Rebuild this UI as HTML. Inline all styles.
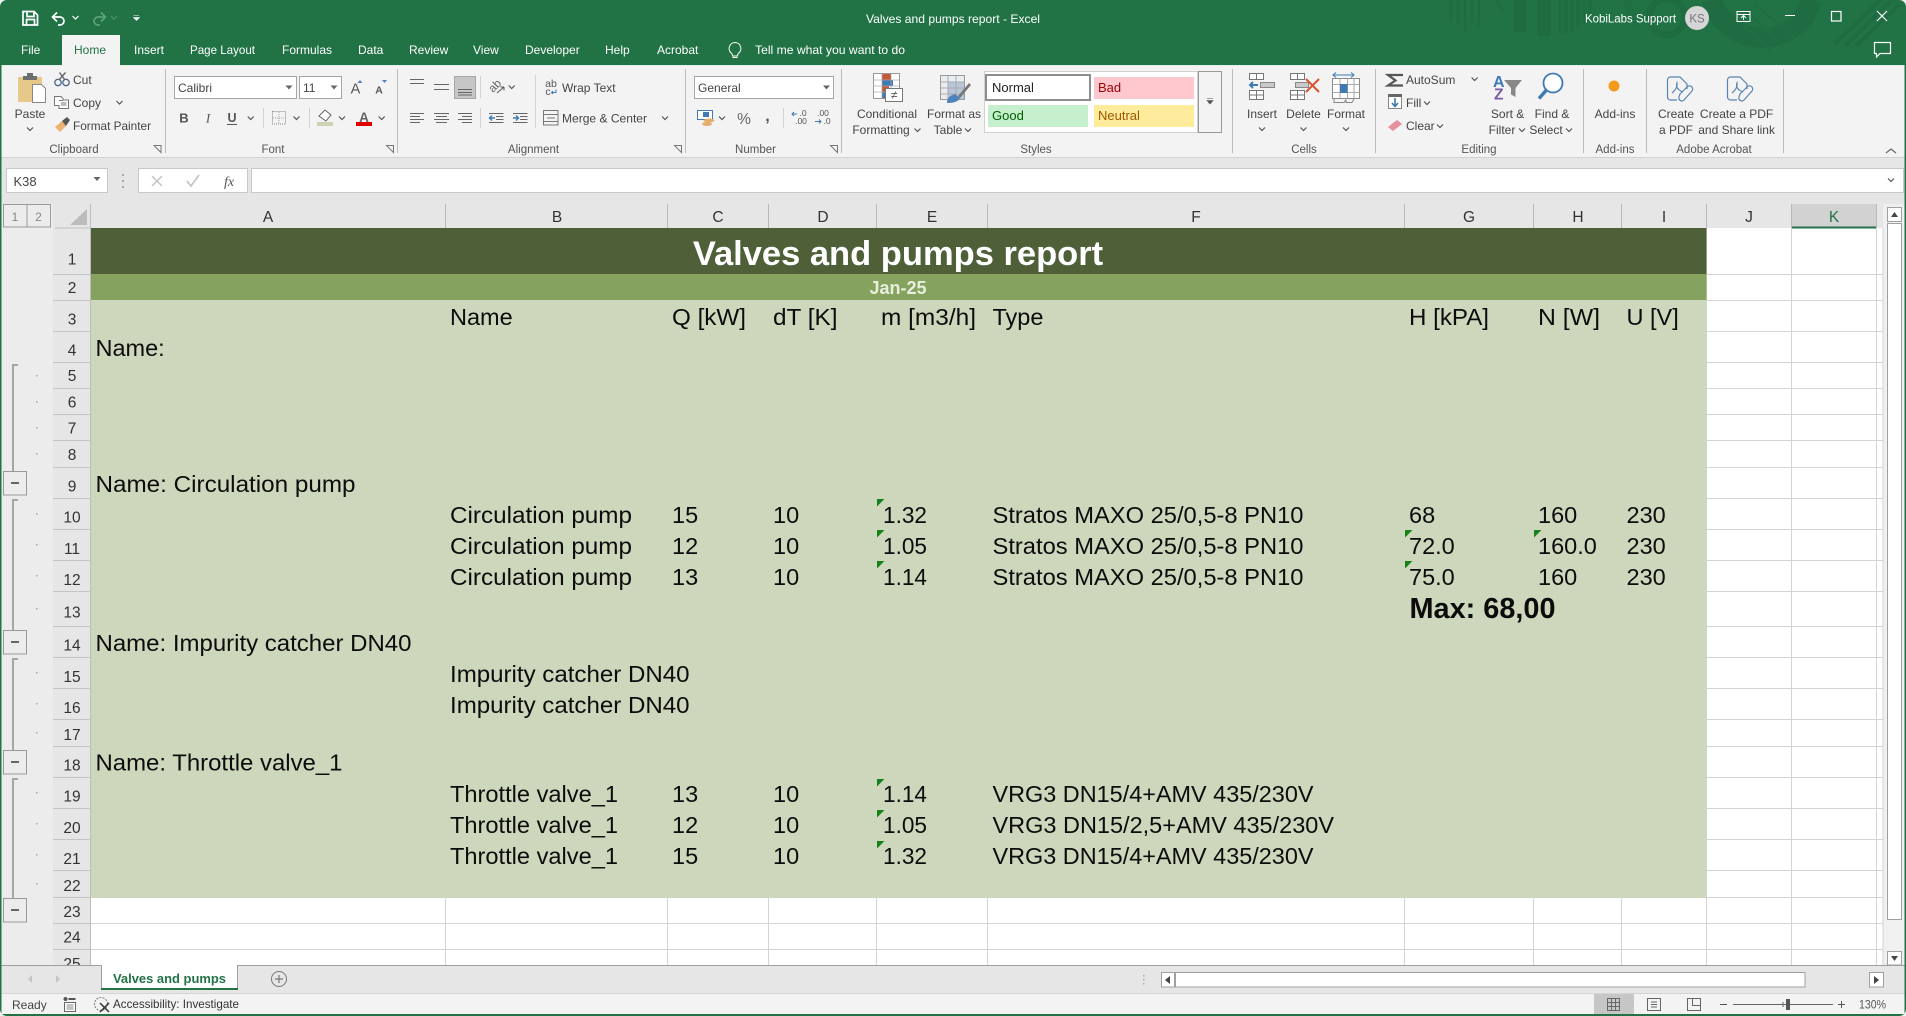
<!DOCTYPE html>
<html lang="en"><head><meta charset="utf-8"><title>Valves and pumps report - Excel</title>
<style>
html,body{margin:0;padding:0;background:#217346;overflow:hidden}
svg{display:block;font-family:"Liberation Sans",sans-serif}
.r{font-size:12px;fill:#444}
.rc{font-size:12px;fill:#444;text-anchor:middle}
.g{font-size:11.5px;fill:#555;text-anchor:middle}
.tab{font-size:12px;fill:#fff}
.c{font-size:23.5px;fill:#0c0c0c}
.h{font-size:15.5px;fill:#333;text-anchor:middle}
.n{font-size:15.5px;fill:#333;text-anchor:middle}
.chev{fill:none;stroke:#555;stroke-width:1.2}
</style></head><body>
<svg width="1906" height="1016" viewBox="0 0 1906 1016" xmlns="http://www.w3.org/2000/svg">
<defs>
<path id="c" class="chev" d="M-3 -1.5L0 1.5L3 -1.5"/>
<path id="d" d="M-3.5 -2H3.5L0 2Z" fill="#666"/>
<path id="x" d="M-3.5 -3.5L3.5 3.5V-3.5H-3.5Z" fill="none" stroke="#777" stroke-width="1"/>
<path id="tri" d="M0 1H7.5L0 8.5Z" fill="#17811d"/>
</defs>

<!-- title bar -->
<rect width="1906" height="1016" fill="#217346"/>
<g fill="none" stroke="#1f6c42">
<path d="M1451 0V22M1458 0V24M1465 0V32M1472 0V22M1479 0V26" stroke-width="3"/>
<path d="M1497 0L1503 12" stroke-width="3"/>
<path d="M1520 0V32" stroke-width="12"/>
<path d="M1544 0V36" stroke-width="14"/>
<path d="M1560 0V34M1566 0V34M1572 0V32M1578 0V28M1584 0V24M1590 0V20" stroke-width="3"/>
<circle cx="1667" cy="17" r="18" stroke-width="7"/>
<path d="M1627 0A34 34 0 0 0 1640 24" stroke-width="8" opacity=".6"/>
<path d="M1712 0A52 52 0 0 0 1812 0" stroke-width="20"/>
<path d="M1730 12L1770 50M1742 8L1782 44M1754 4L1794 36" stroke="#206e43" stroke-width="3"/>
<path d="M1835 44L1880 0M1845 46L1892 0M1856 46L1900 4" stroke-width="4"/>
</g>
<path d="M23 11.500H34L37.500 15V25H23Z M27 11.500V16.500H34V11.500 M26.500 25V19.500H34.500V25" fill="none" stroke="#fff" stroke-width="1.700"/>
<path d="M57 12.500L52.500 17L57 21.500 M53 17H60A4 4 0 0 1 60 25H58" fill="none" stroke="#fff" stroke-width="1.700"/>
<path d="M72.500 16L75.500 19L78.500 16" fill="none" stroke="#fff" stroke-width="1.200"/>
<path d="M101 12.500L105.500 17L101 21.500 M105 17H98A4 4 0 0 0 98 25H100" fill="none" stroke="#5da07a" stroke-width="1.700"/>
<path d="M111 16L114 19L117 16" fill="none" stroke="#4e9570" stroke-width="1.200"/>
<path d="M133.500 15.500H139M133.500 17.500H139.500L136.500 20.500Z" fill="#fff" stroke="#fff" stroke-width=".6"/>
<text x="866" y="23" class="tab" textLength="174" lengthAdjust="spacingAndGlyphs">Valves and pumps report  -  Excel</text>
<text x="1585" y="22.500" class="tab" textLength="91" lengthAdjust="spacingAndGlyphs">KobiLabs Support</text>
<circle cx="1697" cy="18" r="12" fill="#d6d6d6"/><text x="1697" y="22.500" font-size="11.500" fill="#777" text-anchor="middle">KS</text>
<path d="M1737 11.500H1750V21.500H1737ZM1737 14.500H1750M1743.500 20V16M1741 18L1743.500 15.500L1746 18" fill="none" stroke="#fff"/>
<path d="M1785 15.500H1795" stroke="#fff" stroke-width="1"/>
<rect x="1831.500" y="11.500" width="9.500" height="9.500" fill="none" stroke="#fff" stroke-width="1.200"/>
<path d="M1877 11L1887 21M1887 11L1877 21" stroke="#fff" stroke-width="1.200"/>
<path d="M1874.500 42.500H1890.500V53.500H1880L1876.500 57V53.500H1874.500Z" fill="none" stroke="#fff" stroke-width="1.200"/>

<!-- tabs -->
<rect x="62" y="35" width="58" height="31" fill="#f3f3f3"/>
<text x="21" y="54" class="tab">File</text>
<text x="74" y="54" class="tab" style="fill:#217346">Home</text>
<text x="134" y="54" class="tab">Insert</text>
<text x="190" y="54" class="tab" textLength="65" lengthAdjust="spacingAndGlyphs">Page Layout</text>
<text x="282" y="54" class="tab">Formulas</text>
<text x="358" y="54" class="tab">Data</text>
<text x="409" y="54" class="tab">Review</text>
<text x="473" y="54" class="tab">View</text>
<text x="525" y="54" class="tab">Developer</text>
<text x="605" y="54" class="tab">Help</text>
<text x="657" y="54" class="tab">Acrobat</text>
<path d="M735 42.500a6 6 0 0 1 3.500 10.800c-.8.700-1 1.500-1 2.700h-5c0-1.200-.2-2-1-2.700A6 6 0 0 1 735 42.500ZM732.500 57.500h5" fill="none" stroke="#fff"/>
<text x="755" y="54" class="tab" textLength="150" lengthAdjust="spacingAndGlyphs">Tell me what you want to do</text>

<!-- ribbon -->
<rect x="1" y="65" width="1904" height="92" fill="#f3f3f3"/>
<rect x="1" y="65" width="61" height="1" fill="#e2f1e8"/><rect x="120" y="65" width="1785" height="1" fill="#e2f1e8"/>
<rect x="1" y="157" width="1904" height="47" fill="#e6e6e6"/>
<rect x="1" y="157" width="1904" height="1" fill="#d2d2d2"/>
<g stroke="#bdbdbd" stroke-width="1">
<path d="M165.500 69V153M397.500 69V153M685.500 69V153M841.500 69V153M1232.500 69V153M1375.500 69V153M1583.500 69V153M1646.500 69V153M1783.500 69V153"/>
</g>
<g stroke="#d2d2d2" stroke-width="1"><path d="M263.500 108V128M309.500 108V128M480.500 76V98M480.500 108V128M535.500 75V128M783.500 108V128"/></g>
<g>
<text x="74" y="153" class="g">Clipboard</text><text x="273" y="153" class="g">Font</text><text x="533.500" y="153" class="g">Alignment</text><text x="755.500" y="153" class="g">Number</text><text x="1036" y="153" class="g">Styles</text><text x="1304" y="153" class="g">Cells</text><text x="1479" y="153" class="g">Editing</text><text x="1615" y="153" class="g">Add-ins</text><text x="1714" y="153" class="g">Adobe Acrobat</text>
</g>
<use href="#x" x="157.500" y="149"/><use href="#x" x="390" y="149"/><use href="#x" x="678" y="149"/><use href="#x" x="834" y="149"/>
<path d="M1886 153L1891 149L1896 153" fill="none" stroke="#666" stroke-width="1.200"/>

<!-- clipboard -->
<rect x="18" y="77" width="24" height="25" fill="#e6c988"/>
<path d="M23 80V76H27V73H33V76H37V80Z" fill="#6e6e6e"/>
<path d="M32.500 84.500H41.500L45.500 88.500V102.500H32.500Z" fill="#fff" stroke="#888"/>
<text x="30" y="118" class="rc">Paste</text><use href="#c" x="30" y="129"/>
<g fill="none" stroke="#50688a" stroke-width="1.300"><circle cx="58" cy="82.500" r="3.200"/><circle cx="66" cy="82.500" r="3.200"/></g>
<path d="M59.500 72.500L65 80M65.500 72.500L59 80" stroke="#666" stroke-width="1.400"/>
<text x="73" y="84" class="r">Cut</text>
<path d="M54.500 96.500H61L63 98.500V100H68.500V108.500H59V105.500H54.500Z M59 100.500H63" fill="#fff" stroke="#777"/>
<path d="M61 103H66.500M61 105H66.500" stroke="#777"/>
<text x="73" y="107" class="r">Copy</text><use href="#c" x="119.500" y="102.500"/>
<path d="M55 127L62 121L66 126L60 132Z" fill="#edb26f"/><path d="M62 121L67 117L70 120L66 126Z" fill="#555"/>
<text x="73" y="130" class="r" textLength="78" lengthAdjust="spacingAndGlyphs">Format Painter</text>

<!-- font -->
<rect x="174.500" y="76.500" width="122" height="22" fill="#fff" stroke="#a6a6a6"/>
<text x="178" y="92" class="r">Calibri</text><use href="#d" x="289" y="87.500"/>
<rect x="299.500" y="76.500" width="42" height="22" fill="#fff" stroke="#a6a6a6"/>
<text x="303" y="92" class="r">11</text><use href="#d" x="334" y="87.500"/>
<text x="355.500" y="93.500" text-anchor="middle" font-size="14.500" fill="#555">A</text><path d="M357.500 83L360 80L362.500 83Z" fill="#4f81bd"/>
<text x="379" y="93.500" text-anchor="middle" font-size="10.500" fill="#555" font-weight="bold">A</text><path d="M382 80H387L384.500 83Z" fill="#4f81bd"/>
<text x="184" y="122.500" text-anchor="middle" font-size="13" font-weight="bold" fill="#555">B</text>
<text x="208" y="122.500" text-anchor="middle" font-size="13" font-style="italic" font-family="Liberation Serif" fill="#555">I</text>
<text x="232" y="122" text-anchor="middle" font-size="12.500" font-weight="bold" fill="#555">U</text><path d="M227 124.500H237" stroke="#555"/>
<use href="#c" x="250.700" y="118"/>
<rect x="272.500" y="111.500" width="13" height="12.500" fill="none" stroke="#888" stroke-dasharray="1 1"/><path d="M279 112V124M273 118H285" stroke="#aaa" stroke-dasharray="1 1"/>
<use href="#c" x="296.500" y="118"/>
<path d="M319 116L325 110L331 115L326 121Z" fill="#fff" stroke="#666"/><rect x="317" y="122" width="16" height="4" fill="#cdd2b5"/>
<use href="#c" x="342" y="118"/>
<text x="364" y="122" text-anchor="middle" font-size="13.500" font-weight="bold" fill="#666">A</text><rect x="356" y="122" width="16" height="4" fill="#e00000"/>
<use href="#c" x="381.700" y="118"/>

<!-- alignment -->
<rect x="454.500" y="76.500" width="21" height="22" fill="#c6c6c6" stroke="#a6a6a6"/>
<g stroke="#666"><path d="M410 79.500H424M410 83.500H424 M434 84.500H449M434 89.500H449 M458 89.500H472M458 92.500H472M458 95H472" />
<path d="M410 113.500H424M410 116.500H420M410 119.500H424M410 122.500H420"/>
<path d="M434 113.500H449M436 116.500H447M434 119.500H449M436 122.500H447"/>
<path d="M458 113.500H472M462 116.500H472M458 119.500H472M462 122.500H472"/>
<path d="M489 113.500H503.500M496 116.500H503.500M496 119.500H503.500M489 122.500H503.500 M513 113.500H527.500M520 116.500H527.500M520 119.500H527.500M513 122.500H527.500"/></g>
<path d="M495 118H489.500M492 115.500L489.500 118L492 120.500 M513 118H518.500M516 115.500L518.500 118L516 120.500" fill="none" stroke="#3f7ab5" stroke-width="1.400"/>
<text transform="translate(493 93) rotate(-45)" font-size="11.500" fill="#666">ab</text><path d="M497 93L504 87M504 87H500.500M504 87V90.500" fill="none" stroke="#555"/>
<use href="#c" x="511.700" y="87"/>
<text x="551" y="87" text-anchor="middle" font-size="10.500" fill="#555">ab</text><text x="548" y="95" text-anchor="middle" font-size="10.500" fill="#555">c</text><path d="M556 89.500V92.500H551.500M553 91L551.500 92.500L553 94" fill="none" stroke="#3f7ab5"/>
<text x="562" y="92" class="r">Wrap Text</text>
<rect x="543.500" y="110.500" width="14.500" height="14.500" fill="none" stroke="#777"/><path d="M543.500 114.500H558M543.500 121.500H558M547 118H555" stroke="#777"/>
<text x="562" y="122.500" class="r" textLength="85" lengthAdjust="spacingAndGlyphs">Merge &amp; Center</text><use href="#c" x="665" y="118"/>

<!-- number -->
<rect x="694.500" y="76.500" width="139" height="22" fill="#fff" stroke="#a6a6a6"/>
<text x="698" y="92" class="r">General</text><use href="#d" x="826.500" y="87.500"/>
<rect x="697.500" y="110.500" width="15" height="9" fill="#fff" stroke="#3f7ab5"/><path d="M703 112H709V117H703Z" fill="#3f7ab5"/><ellipse cx="709" cy="120.500" rx="5.500" ry="2" fill="#e2b06c"/><ellipse cx="707" cy="124" rx="5" ry="2" fill="#e2b06c"/>
<use href="#c" x="722" y="118"/>
<text x="744" y="124" text-anchor="middle" font-size="15.500" fill="#666">%</text>
<text x="767.500" y="121" text-anchor="middle" font-size="16" font-weight="bold" fill="#555">,</text>
<text x="803" y="116" text-anchor="middle" font-size="8.500" fill="#555">.0</text><text x="801" y="124" text-anchor="middle" font-size="8.500" fill="#555">.00</text><path d="M792 114H797M794 112L792 114L794 116" fill="none" stroke="#3f7ab5"/>
<text x="823" y="116" text-anchor="middle" font-size="8.500" fill="#555">.00</text><text x="827" y="124" text-anchor="middle" font-size="8.500" fill="#555">.0</text><path d="M815 121.500H821M819 119.500L821 121.500L819 123.500" fill="none" stroke="#3f7ab5"/>

<!-- styles -->
<g>
<rect x="873.500" y="73.500" width="26" height="25" fill="#fff" stroke="#999"/>
<rect x="882" y="74" width="9" height="6" fill="#c5573a"/><rect x="882" y="80" width="11" height="6" fill="#3f7ab5"/><rect x="882" y="86" width="7" height="6" fill="#c5573a"/><rect x="882" y="92" width="3" height="6" fill="#3f7ab5"/>
<path d="M882 74V98M891 74V98M874 80H899M874 86H899M874 92H899" stroke="#aaa" opacity=".7"/>
<rect x="885.500" y="88.500" width="17" height="13" fill="#fff" stroke="#777"/><text x="894" y="99" text-anchor="middle" font-size="12" fill="#555">≠</text>
</g>
<text x="887" y="118" class="rc">Conditional</text><text x="881" y="134" class="rc">Formatting</text><use href="#c" x="917.500" y="130"/>
<rect x="940.500" y="75.500" width="24" height="24" fill="#e9edf2" stroke="#999"/><rect x="948" y="82" width="16" height="17" fill="#b7c6d8"/>
<path d="M948 76V99M956 76V99M941 82H964M941 88H964M941 94H964" stroke="#aaa"/>
<path d="M958 96L969 83L971 85L960 98Z" fill="#777"/><path d="M947 103Q947 96 955 94L960 98Q958 103 947 103Z" fill="#4f81bd"/>
<text x="954" y="118" class="rc">Format as</text><text x="948" y="134" class="rc">Table</text><use href="#c" x="968" y="130"/>
<rect x="984.500" y="71.500" width="213" height="61" fill="#fff" stroke="#d0d0d0"/>
<rect x="986" y="75" width="104" height="25" fill="#fff" stroke="#8e8e8e" stroke-width="2"/>
<text x="992" y="92" font-size="13" fill="#222">Normal</text>
<rect x="1094" y="77" width="100" height="22" fill="#ffc7ce"/><text x="1098" y="92" font-size="13" fill="#9c0006">Bad</text>
<rect x="988" y="105" width="100" height="22" fill="#c6efce"/><text x="992" y="120" font-size="13" fill="#006100">Good</text>
<rect x="1094" y="105" width="100" height="22" fill="#ffeb9c"/><text x="1098" y="120" font-size="13" fill="#9c5700">Neutral</text>
<rect x="1198.500" y="71.500" width="23" height="61" fill="#f3f3f3" stroke="#999"/>
<path d="M1207 98.500H1213M1207 100.500H1213L1210 104Z" fill="#555" stroke="#555" stroke-width=".6"/>

<!-- cells -->
<g><rect x="1249.500" y="73.500" width="14" height="6" fill="#fff" stroke="#777"/><path d="M1256.500 73.500V79.500" stroke="#777"/>
<rect x="1260.500" y="82.500" width="14" height="5" fill="#c9c9c9" stroke="#888"/><path d="M1258 85H1250M1253 82L1250 85L1253 88" fill="none" stroke="#3f7ab5" stroke-width="2"/>
<rect x="1249.500" y="90.500" width="14" height="9" fill="#fff" stroke="#777"/><path d="M1256.500 90.500V99.500M1249.500 95H1263.500" stroke="#777"/></g>
<text x="1262" y="118" class="rc">Insert</text><use href="#c" x="1262" y="129"/>
<rect x="1290.500" y="73.500" width="14" height="6" fill="#fff" stroke="#777"/><rect x="1295.500" y="82.500" width="13" height="5" fill="#c9c9c9" stroke="#888"/><rect x="1290.500" y="90.500" width="14" height="9" fill="#fff" stroke="#777"/><path d="M1297.500 90.500V99.500M1290.500 95H1304.500M1297.500 73.500V79.500" stroke="#777"/>
<path d="M1306 79L1319 92M1319 79L1306 92" stroke="#d65532" stroke-width="2"/>
<text x="1303.500" y="118" class="rc">Delete</text><use href="#c" x="1303.500" y="129"/>
<rect x="1332.500" y="78.500" width="27" height="20" fill="#fff" stroke="#888"/><path d="M1340 78.500V98.500M1347.500 78.500V98.500M1354 78.500V98.500M1332.500 84.500H1359.500M1332.500 92.500H1359.500" stroke="#aaa"/><rect x="1340" y="84" width="7.500" height="9" fill="#3f7ab5"/>
<path d="M1333 75H1354M1336 72.500L1333 75L1336 77.500M1351 72.500L1354 75L1351 77.500" fill="none" stroke="#3f7ab5"/>
<path d="M1334 98.500V102.500H1344L1346 99.500M1346 99.500V102.500H1352L1354 99" fill="none" stroke="#888"/>
<text x="1346" y="118" class="rc">Format</text><use href="#c" x="1346" y="129"/>

<!-- editing -->
<path d="M1403 75H1388L1395.500 80.500L1388 85.500H1403" fill="none" stroke="#555" stroke-width="2.200"/>
<text x="1406" y="84" class="r">AutoSum</text><use href="#c" x="1474.600" y="79"/>
<rect x="1388.500" y="94.500" width="13" height="14" fill="#fff" stroke="#888"/><rect x="1388" y="94" width="14" height="3" fill="#666"/><path d="M1395 98V106M1392 103L1395 106.500L1398 103" fill="none" stroke="#3f7ab5" stroke-width="1.600"/>
<text x="1406" y="107" class="r">Fill</text><use href="#c" x="1427" y="103"/>
<path d="M1388 127L1397 120L1402 124L1393 131Z" fill="#e88f9e"/>
<text x="1406" y="130" class="r">Clear</text><use href="#c" x="1440" y="126"/>
<text x="1493" y="87" font-size="16" font-weight="bold" fill="#3f7ab5">A</text><text x="1494" y="99.500" font-size="15.500" font-weight="bold" fill="#7b5aa6">Z</text>
<path d="M1504 80H1522L1515.500 88V97L1511 94.500V88Z" fill="#888"/>
<text x="1507.600" y="118" class="rc">Sort &amp;</text><text x="1502" y="134" class="rc">Filter</text><use href="#c" x="1522" y="130"/>
<circle cx="1553" cy="83" r="9.500" fill="#fff" stroke="#3f7ab5" stroke-width="1.800"/><path d="M1546.500 90L1539 98.500" stroke="#3f7ab5" stroke-width="3.500"/>
<text x="1552" y="118" class="rc">Find &amp;</text><text x="1546" y="134" class="rc">Select</text><use href="#c" x="1569" y="130"/>

<!-- addins -->
<circle cx="1614" cy="86" r="5.500" fill="#f39b1e"/>
<text x="1615" y="118" class="rc">Add-ins</text>

<!-- acrobat -->
<g fill="none" stroke="#5b84b1" stroke-width="1.200">
<path d="M1667.500 97V80a3 3 0 0 1 3-3H1680L1687 84V89M1667.500 97a3 3 0 0 0 3 3H1677"/><path d="M1672 93Q1678 88 1677 83Q1675 89 1683 92"/>
<path d="M1680 94L1687 87A3 3 0 0 1 1692 91L1684 100A3 3 0 0 1 1679 97Z"/>
<path d="M1727.500 97V80a3 3 0 0 1 3-3H1740L1747 84V89M1727.500 97a3 3 0 0 0 3 3H1737"/><path d="M1732 93Q1738 88 1737 83Q1735 89 1743 92"/>
<path d="M1740 94L1747 87A3 3 0 0 1 1752 91L1744 100A3 3 0 0 1 1739 97Z"/>
</g>
<text x="1676" y="118" class="rc">Create</text><text x="1676" y="134" class="rc">a PDF</text>
<text x="1736.600" y="118" class="rc">Create a PDF</text><text x="1736.600" y="134" class="rc">and Share link</text>

<!-- formula bar -->
<rect x="6.500" y="168.500" width="101" height="24" fill="#fff" stroke="#c8c8c8"/>
<text x="13.500" y="186" font-size="13" fill="#444">K38</text><use href="#d" x="97" y="179"/>
<g fill="#aaa"><rect x="122" y="174" width="2" height="2"/><rect x="122" y="180" width="2" height="2"/><rect x="122" y="186" width="2" height="2"/></g>
<rect x="138.500" y="168.500" width="109" height="24" fill="#fff" stroke="#c8c8c8"/>
<path d="M152 176L162 186M162 176L152 186" stroke="#c4c4c4" stroke-width="1.500"/>
<path d="M187 181L191 186L199 175" fill="none" stroke="#c4c4c4" stroke-width="1.800"/>
<text x="229" y="186" text-anchor="middle" font-family="Liberation Serif" font-style="italic" font-size="14" fill="#555">fx</text>
<rect x="251.500" y="168.500" width="1652" height="24" fill="#fff" stroke="#c8c8c8"/>
<use href="#c" x="1891" y="180" style="stroke-width:1.500"/>

<!-- sheet -->
<rect x="1" y="204" width="1904" height="761" fill="#ececec"/>
<rect x="91" y="204" width="1796" height="24" fill="#e6e6e6"/>
<rect x="53" y="204" width="38" height="761" fill="#e6e6e6"/>
<rect x="91" y="228" width="1792" height="737" fill="#fff"/>
<rect x="1883" y="204" width="23" height="761" fill="#f0f0f0"/>
<rect x="1791.500" y="204" width="85" height="24" fill="#d2d2d2"/>
<rect x="1791.500" y="226.500" width="85" height="2" fill="#217346"/>
<rect x="90" y="204" width="1" height="761" fill="#bdbdbd"/>
<g stroke="#b8b8b8"><path d="M445.500 204V228M667.500 204V228M768.500 204V228M876.500 204V228M987.500 204V228M1404.500 204V228M1533.500 204V228M1621.500 204V228M1706.500 204V228M1791.500 204V228M1876.500 204V228"/></g>
<g><text x="268" y="222" class="h">A</text><text x="557" y="222" class="h">B</text><text x="718" y="222" class="h">C</text><text x="823" y="222" class="h">D</text><text x="932" y="222" class="h">E</text><text x="1196" y="222" class="h">F</text><text x="1469" y="222" class="h">G</text><text x="1578" y="222" class="h">H</text><text x="1664" y="222" class="h">I</text><text x="1749" y="222" class="h">J</text><text x="1834" y="222" class="h" style="fill:#217346">K</text></g>
<g fill="#ececec" stroke="#9a9a9a"><rect x="3.500" y="204.500" width="23.500" height="22.500"/><rect x="27" y="204.500" width="23.500" height="22.500"/></g>
<text x="15" y="221" text-anchor="middle" font-size="12" fill="#888">1</text><text x="38.500" y="221" text-anchor="middle" font-size="12" fill="#888">2</text>
<path d="M87 209V225H70Z" fill="#bcbcbc"/>
<path d="M55 228H90" stroke="#c0c0c0"/>

<!-- grid -->
<g stroke="#d4d4d4" fill="none">
<path d="M445.500 228V965M667.500 228V965M768.500 228V965M876.500 228V965M987.500 228V965M1404.500 228V965M1533.500 228V965M1621.500 228V965M1706.500 228V965M1791.500 228V965M1876.500 228V965M1883 228V965"/>
<path d="M91 274.500H1883M91 300.500H1883M91 331.500H1883M91 362.500H1883M91 388.500H1883M91 414.500H1883M91 440.500H1883M91 467.500H1883M91 498.500H1883M91 529.500H1883M91 560.500H1883M91 591.500H1883M91 626.500H1883M91 657.500H1883M91 688.500H1883M91 719.500H1883M91 746.500H1883M91 777.500H1883M91 808.500H1883M91 839.500H1883M91 870.500H1883M91 897.500H1883M91 923.500H1883M91 949.500H1883"/>
</g>
<rect x="91" y="300" width="1615.500" height="598" fill="#cdd7bb"/>
<rect x="91" y="274" width="1615.500" height="26" fill="#85a35f"/>
<rect x="91" y="228" width="1615.500" height="46" fill="#4f6039"/>
<text x="898" y="265" text-anchor="middle" font-size="34.500" font-weight="bold" fill="#fff">Valves and pumps report</text>
<text x="898" y="294" text-anchor="middle" font-size="18" font-weight="bold" fill="#e8efdd">Jan-25</text>

<!-- row header lines & numbers -->
<g stroke="#c4c4c4"><path d="M53 274.500H90M53 300.500H90M53 331.500H90M53 362.500H90M53 388.500H90M53 414.500H90M53 440.500H90M53 467.500H90M53 498.500H90M53 529.500H90M53 560.500H90M53 591.500H90M53 626.500H90M53 657.500H90M53 688.500H90M53 719.500H90M53 746.500H90M53 777.500H90M53 808.500H90M53 839.500H90M53 870.500H90M53 897.500H90M53 923.500H90M53 949.500H90"/></g>
<g>
<text x="72" y="264.500" class="n">1</text><text x="72" y="293" class="n">2</text><text x="72" y="324.500" class="n">3</text><text x="72" y="355.500" class="n">4</text><text x="72" y="381" class="n">5</text><text x="72" y="407.500" class="n">6</text><text x="72" y="433.500" class="n">7</text><text x="72" y="460" class="n">8</text><text x="72" y="491.500" class="n">9</text><text x="72" y="522.700" class="n">10</text><text x="72" y="554" class="n">11</text><text x="72" y="585" class="n">12</text><text x="72" y="617.500" class="n">13</text><text x="72" y="650.700" class="n">14</text><text x="72" y="682" class="n">15</text><text x="72" y="713" class="n">16</text><text x="72" y="740" class="n">17</text><text x="72" y="770.700" class="n">18</text><text x="72" y="801.500" class="n">19</text><text x="72" y="833" class="n">20</text><text x="72" y="864" class="n">21</text><text x="72" y="891" class="n">22</text><text x="72" y="917" class="n">23</text><text x="72" y="942.700" class="n">24</text><text x="72" y="969" class="n">25</text>
</g>
<!-- outline -->
<g fill="none" stroke="#a6a6a6" stroke-width="2"><path d="M18 365H13V471.500M18 500H13V630M18 659H13V750M18 779H13V898"/></g>
<g fill="#a8a8a8"><rect x="36" y="375" width="1.500" height="1.500"/><rect x="36" y="401" width="1.500" height="1.500"/><rect x="36" y="427" width="1.500" height="1.500"/><rect x="36" y="453" width="1.500" height="1.500"/><rect x="36" y="513" width="1.500" height="1.500"/><rect x="36" y="544" width="1.500" height="1.500"/><rect x="36" y="575" width="1.500" height="1.500"/><rect x="36" y="608" width="1.500" height="1.500"/><rect x="36" y="672" width="1.500" height="1.500"/><rect x="36" y="703" width="1.500" height="1.500"/><rect x="36" y="732" width="1.500" height="1.500"/><rect x="36" y="792" width="1.500" height="1.500"/><rect x="36" y="823" width="1.500" height="1.500"/><rect x="36" y="854" width="1.500" height="1.500"/><rect x="36" y="883" width="1.500" height="1.500"/></g>
<g fill="#ececec" stroke="#9a9a9a"><rect x="3.500" y="471.500" width="23" height="23.500"/><rect x="3.500" y="630.500" width="23" height="23.500"/><rect x="3.500" y="750.500" width="23" height="23.500"/><rect x="3.500" y="898.500" width="23" height="23.500"/></g>
<g fill="#666"><rect x="11" y="482" width="8" height="2"/><rect x="11" y="641" width="8" height="2"/><rect x="11" y="761" width="8" height="2"/><rect x="11" y="909" width="8" height="2"/></g>

<!-- cell text -->
<g>
<text x="450" y="325" class="c">Name</text><text x="672" y="325" class="c" textLength="74" lengthAdjust="spacingAndGlyphs">Q [kW]</text><text x="773" y="325" class="c" textLength="64.500" lengthAdjust="spacingAndGlyphs">dT [K]</text><text x="881" y="325" class="c" textLength="95" lengthAdjust="spacingAndGlyphs">m [m3/h]</text><text x="992.500" y="325" class="c">Type</text><text x="1409" y="325" class="c" textLength="80" lengthAdjust="spacingAndGlyphs">H [kPA]</text><text x="1538" y="325" class="c" textLength="62" lengthAdjust="spacingAndGlyphs">N [W]</text><text x="1626.500" y="325" class="c">U [V]</text>
<text x="95.500" y="356" class="c">Name:</text>
<text x="95.500" y="492" class="c" textLength="260" lengthAdjust="spacingAndGlyphs">Name: Circulation pump</text>
<text x="450" y="523" class="c" textLength="182" lengthAdjust="spacingAndGlyphs">Circulation pump</text><text x="672" y="523" class="c">15</text><text x="773" y="523" class="c">10</text><text x="883" y="523" class="c" textLength="44" lengthAdjust="spacingAndGlyphs">1.32</text><text x="992.500" y="523" class="c" textLength="311" lengthAdjust="spacingAndGlyphs">Stratos MAXO 25/0,5-8 PN10</text><text x="1409" y="523" class="c">68</text><text x="1538" y="523" class="c">160</text><text x="1626.500" y="523" class="c">230</text>
<text x="450" y="554" class="c" textLength="182" lengthAdjust="spacingAndGlyphs">Circulation pump</text><text x="672" y="554" class="c">12</text><text x="773" y="554" class="c">10</text><text x="883" y="554" class="c" textLength="44" lengthAdjust="spacingAndGlyphs">1.05</text><text x="992.500" y="554" class="c" textLength="311" lengthAdjust="spacingAndGlyphs">Stratos MAXO 25/0,5-8 PN10</text><text x="1409" y="554" class="c">72.0</text><text x="1538" y="554" class="c">160.0</text><text x="1626.500" y="554" class="c">230</text>
<text x="450" y="585" class="c" textLength="182" lengthAdjust="spacingAndGlyphs">Circulation pump</text><text x="672" y="585" class="c">13</text><text x="773" y="585" class="c">10</text><text x="883" y="585" class="c" textLength="44" lengthAdjust="spacingAndGlyphs">1.14</text><text x="992.500" y="585" class="c" textLength="311" lengthAdjust="spacingAndGlyphs">Stratos MAXO 25/0,5-8 PN10</text><text x="1409" y="585" class="c">75.0</text><text x="1538" y="585" class="c">160</text><text x="1626.500" y="585" class="c">230</text>
<text x="1409.500" y="618" font-size="28.500" font-weight="bold" fill="#0c0c0c" textLength="146" lengthAdjust="spacingAndGlyphs">Max: 68,00</text>
<text x="95.500" y="651" class="c" textLength="316" lengthAdjust="spacingAndGlyphs">Name: Impurity catcher DN40</text>
<text x="450" y="682" class="c" textLength="239.500" lengthAdjust="spacingAndGlyphs">Impurity catcher DN40</text>
<text x="450" y="713" class="c" textLength="239.500" lengthAdjust="spacingAndGlyphs">Impurity catcher DN40</text>
<text x="95.500" y="770.500" class="c" textLength="247" lengthAdjust="spacingAndGlyphs">Name: Throttle valve_1</text>
<text x="450" y="802" class="c" textLength="168" lengthAdjust="spacingAndGlyphs">Throttle valve_1</text><text x="672" y="802" class="c">13</text><text x="773" y="802" class="c">10</text><text x="883" y="802" class="c" textLength="44" lengthAdjust="spacingAndGlyphs">1.14</text><text x="992.500" y="802" class="c" textLength="321" lengthAdjust="spacingAndGlyphs">VRG3 DN15/4+AMV 435/230V</text>
<text x="450" y="833" class="c" textLength="168" lengthAdjust="spacingAndGlyphs">Throttle valve_1</text><text x="672" y="833" class="c">12</text><text x="773" y="833" class="c">10</text><text x="883" y="833" class="c" textLength="44" lengthAdjust="spacingAndGlyphs">1.05</text><text x="992.500" y="833" class="c" textLength="341.500" lengthAdjust="spacingAndGlyphs">VRG3 DN15/2,5+AMV 435/230V</text>
<text x="450" y="864" class="c" textLength="168" lengthAdjust="spacingAndGlyphs">Throttle valve_1</text><text x="672" y="864" class="c">15</text><text x="773" y="864" class="c">10</text><text x="883" y="864" class="c" textLength="44" lengthAdjust="spacingAndGlyphs">1.32</text><text x="992.500" y="864" class="c" textLength="321" lengthAdjust="spacingAndGlyphs">VRG3 DN15/4+AMV 435/230V</text>
</g>
<use href="#tri" x="877" y="498"/><use href="#tri" x="877" y="529"/><use href="#tri" x="877" y="560"/><use href="#tri" x="877" y="778"/><use href="#tri" x="877" y="809"/><use href="#tri" x="877" y="840"/><use href="#tri" x="1405" y="529"/><use href="#tri" x="1405" y="560"/><use href="#tri" x="1534" y="529"/>

<!-- v scrollbar -->
<rect x="1887.500" y="207.500" width="14" height="14" fill="#fff" stroke="#a0a0a0"/><path d="M1891 217L1894.500 212L1898 217Z" fill="#444"/>
<rect x="1887.500" y="223.500" width="14" height="696" fill="#fff" stroke="#a0a0a0"/>
<rect x="1887.500" y="951.500" width="14" height="13.500" fill="#fff" stroke="#a0a0a0"/><path d="M1891 956L1894.500 961L1898 956Z" fill="#444"/>

<!-- tab bar -->
<rect x="1" y="965" width="1904" height="28" fill="#e6e6e6"/>
<rect x="1" y="965" width="1904" height="1" fill="#9e9e9e"/>
<path d="M32 975L28 979L32 983Z M56 975L60 979L56 983Z" fill="#c4c4c4"/>
<rect x="101.500" y="965" width="136" height="25" fill="#fff"/><path d="M101.500 965V990M237.500 965V990" stroke="#9e9e9e"/><rect x="101" y="988" width="137" height="2" fill="#217346"/>
<text x="113" y="983" font-size="13" font-weight="bold" fill="#217346" textLength="113" lengthAdjust="spacingAndGlyphs">Valves and pumps</text>
<circle cx="279" cy="979" r="7.500" fill="none" stroke="#777"/><path d="M275 979H283M279 975V983" stroke="#777" stroke-width="1.200"/>
<g fill="#aaa"><rect x="1143" y="975" width="1.500" height="1.500"/><rect x="1143" y="979" width="1.500" height="1.500"/><rect x="1143" y="983" width="1.500" height="1.500"/></g>
<rect x="1161.500" y="972.500" width="13" height="14.500" fill="#fff" stroke="#a0a0a0"/><path d="M1170 976V984L1165 980Z" fill="#444"/>
<rect x="1175.500" y="972.500" width="629.500" height="14.500" fill="#fff" stroke="#a0a0a0"/>
<rect x="1869.500" y="972.500" width="14" height="14.500" fill="#fff" stroke="#a0a0a0"/><path d="M1874 976V984L1879 980Z" fill="#444"/>

<!-- status -->
<rect x="1" y="993" width="1904" height="21" fill="#f3f3f3"/>
<rect x="1" y="993" width="1904" height="1" fill="#d4d4d4"/>
<text x="12" y="1009" font-size="12" fill="#444">Ready</text>
<rect x="64.500" y="1002.500" width="11" height="9" fill="#fff" stroke="#666"/><circle cx="65.500" cy="999" r="2" fill="#555"/><rect x="68.500" y="998" width="7" height="2" fill="#555"/>
<path d="M66.500 1005H73.500M66.500 1007H73.500M66.500 1009H73.500" stroke="#888"/>
<circle cx="101" cy="1004" r="6.500" fill="none" stroke="#777" stroke-dasharray="2 1.200"/><path d="M100 1003L109 1012M109 1003L100 1012" stroke="#333" stroke-width="1.500"/>
<text x="113" y="1008" font-size="12" fill="#333" textLength="126" lengthAdjust="spacingAndGlyphs">Accessibility: Investigate</text>
<rect x="1594" y="994" width="40" height="20" fill="#c6c6c6"/>
<g fill="none" stroke="#666"><rect x="1607.500" y="998.500" width="12" height="12"/><path d="M1611.500 998.500V1010.500M1615.500 998.500V1010.500M1607.500 1002.500H1619.500M1607.500 1006.500H1619.500"/>
<rect x="1647.500" y="998.500" width="13" height="12"/><path d="M1651 1002H1657M1651 1004.500H1657M1651 1007H1657"/>
<rect x="1687.500" y="998.500" width="13" height="12"/><path d="M1692.500 998.500V1005.500H1700.500V1000"/></g>
<path d="M1720 1004.500H1727" stroke="#555"/><path d="M1733 1004.500H1833M1783 1002V1007" stroke="#666"/><rect x="1786" y="999" width="4" height="11" fill="#555"/>
<path d="M1838 1004.500H1845M1841.500 1001V1008" stroke="#555"/>
<text x="1859" y="1008.500" font-size="12" fill="#555" textLength="27" lengthAdjust="spacingAndGlyphs">130%</text>
<rect x="0" y="0" width="1.500" height="1016" fill="#217346"/><rect x="1904.500" y="0" width="1.500" height="1016" fill="#217346"/>
<!-- rounded window corners -->
<g fill="#eaf0ec"><path d="M0 0H7A7 7 0 0 0 0 7Z"/><path d="M1906 0H1899A7 7 0 0 1 1906 7Z"/><path d="M0 1016H7A7 7 0 0 1 0 1009Z"/><path d="M1906 1016H1899A7 7 0 0 0 1906 1009Z"/></g>
</svg>
</body></html>
